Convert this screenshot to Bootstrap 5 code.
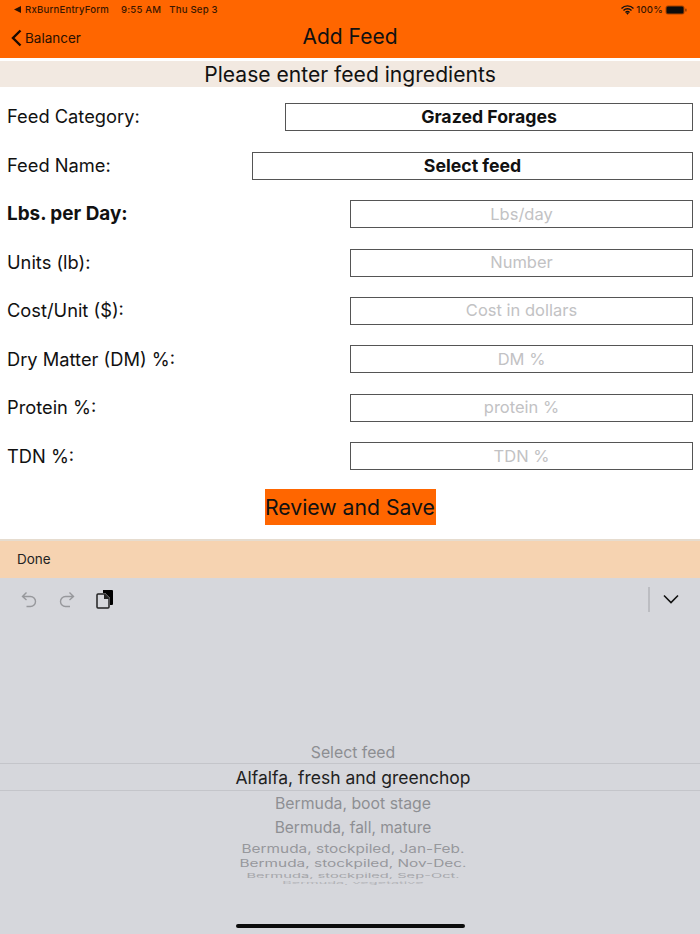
<!DOCTYPE html>
<html lang="en">
<head>
<meta charset="utf-8">
<title>Add Feed</title>
<link href="https://cdn.jsdelivr.net/npm/bootstrap@5.3.0/dist/css/bootstrap.min.css" rel="stylesheet">
<style>
html,body{height:934px;overflow:hidden;}
body{font-family:Inter,"Liberation Sans",sans-serif;color:#111;background:#fff;display:flex;flex-direction:column;}
.app-head{background:#f60;height:58px;flex:none;position:relative;}
.status-line{height:19px;padding:1px 13px 0 14px;font-size:9.6px;letter-spacing:.2px;color:#3a1600;font-weight:500;}
.status-line .right{color:#3a1600;gap:2px;}
.nav-line{height:39px;position:relative;}
.back-link{font-size:13.5px;color:#2a1000;gap:3px;padding-left:11px;height:39px;text-decoration:none;padding-bottom:1px;}
.title-text{position:absolute;left:0;right:0;top:0;line-height:35px;text-align:center;font-size:21px;color:#111;margin:0;font-weight:400;}
.banner{margin-top:3px;height:26px;line-height:28px;background:#f2e9e1;text-align:center;font-size:21.1px;flex:none;}
.form-area{padding:16.2px 7px 0;gap:20.45px;flex:none;height:452px;}
.form-line{height:28px;}
.form-line label{font-size:18.3px;margin:0;white-space:nowrap;}
.form-line label.fw-bold{font-size:18.9px;}
.field{height:28px;border:1px solid #555;border-radius:0;background:#fff;font-size:16.5px;text-align:center;padding:0 4px 1px;color:#111;box-shadow:none;}
.field::placeholder{color:#c2c2c4;opacity:1;}
.field.w-cat{width:408px;}
.field.w-name{width:441px;}
.field.w-num{width:343px;}
.pick{font-weight:700;font-size:17.7px;line-height:25px;padding:0 4px;}
.save-btn{align-self:center;height:36px;width:171px;margin-top:-1.8px;background:#f60;border:0;border-radius:0;color:#111;font-size:21.2px;line-height:36px;padding:0;white-space:nowrap;}
.done-bar{height:39px;flex:none;background:#f6d3b1;border-top:2px solid #e6dccf;padding-left:17px;padding-bottom:1px;font-size:13.5px;color:#222;}
.kbd{flex:1;background:#d6d7dc;position:relative;}
.tool-row{height:42px;padding:0 21px 0 20px;}
.tool-left{gap:20px;}
.tool-sep{width:2px;height:25px;background:#bcbdc2;margin-right:13px;}
.wheel{position:absolute;left:0;right:0;top:164px;text-align:center;}
.wh{display:block;white-space:nowrap;margin:0 auto;line-height:1;padding-left:6px;}
.wh0{font-size:15.8px;color:#8d8e92;height:21px;line-height:21px;}
.wh1{font-size:17.5px;color:#222;height:28px;line-height:28px;border-top:1px solid #c4c5ca;border-bottom:1px solid #c4c5ca;margin-bottom:1px;}
.wh2{font-size:15.8px;color:#8e8f93;height:24px;line-height:23px;}
.wh3{font-size:15.5px;color:#8e8f93;height:24px;line-height:23px;}
.wh4{font-size:15.4px;color:#97989c;height:17px;line-height:17px;transform:scaleY(.8);}
.wh5{font-size:15.4px;color:#97989c;height:14px;line-height:14px;transform:scaleY(.66);}
.wh6{font-size:14.7px;color:#a5a6aa;height:10px;line-height:10px;transform:scaleY(.46);}
.wh7{font-size:14.5px;color:#b2b3b7;height:3px;line-height:3px;transform:scaleY(.24);}
.home-bar{position:absolute;left:236px;bottom:6px;width:229px;height:4px;border-radius:2px;background:#0c0c0c;}
</style>
</head>
<body>
<header class="app-head">
  <div class="status-line d-flex align-items-center justify-content-between">
    <div class="d-flex align-items-center gap-1">
      <svg width="7" height="7" viewBox="0 0 7 7"><path d="M7 0v7L0 3.5z" fill="#2a1000"/></svg>
      <span>RxBurnEntryForm</span><span class="ms-2">9:55 AM</span><span class="ms-1">Thu Sep 3</span>
    </div>
    <div class="right d-flex align-items-center">
      <svg width="13" height="10" viewBox="0 0 13 10"><path d="M.5 3.4a8.5 8.5 0 0 1 12 0M2.5 5.5a5.6 5.6 0 0 1 8 0M4.5 7.4a2.8 2.8 0 0 1 4 0" fill="none" stroke="#111" stroke-width="1.4"/><path d="M5.2 8.3 6.5 9.8l1.3-1.5a1.8 1.8 0 0 0-2.6 0z" fill="#111"/></svg>
      <span>100%</span>
      <svg width="22" height="10" viewBox="0 0 22 10"><rect x=".5" y=".5" width="19" height="9" rx="2.5" fill="#3a1600" opacity=".45"/><rect x="1.5" y="1.5" width="17" height="7" rx="1.5" fill="#0c0c0c"/><rect x="20.3" y="3.4" width="1.2" height="3.2" rx=".6" fill="#7a3000"/></svg>
    </div>
  </div>
  <div class="nav-line">
    <h1 class="title-text">Add Feed</h1>
    <a class="back-link d-inline-flex align-items-center position-relative" href="#">
      <svg width="11" height="18" viewBox="0 0 11 18"><path d="M9.5 1.5 2 9l7.5 7.5" fill="none" stroke="#1a0a00" stroke-width="2.4"/></svg>
      <span>Balancer</span>
    </a>
  </div>
</header>
<div class="banner">Please enter feed ingredients</div>
<main class="form-area d-flex flex-column">
  <div class="form-line d-flex align-items-center justify-content-between"><label>Feed Category:</label><div class="field pick w-cat">Grazed Forages</div></div>
  <div class="form-line d-flex align-items-center justify-content-between"><label>Feed Name:</label><div class="field pick w-name">Select feed</div></div>
  <div class="form-line d-flex align-items-center justify-content-between"><label class="fw-bold">Lbs. per Day:</label><input class="field w-num" placeholder="Lbs/day"></div>
  <div class="form-line d-flex align-items-center justify-content-between"><label>Units (lb):</label><input class="field w-num" placeholder="Number"></div>
  <div class="form-line d-flex align-items-center justify-content-between"><label>Cost/Unit ($):</label><input class="field w-num" placeholder="Cost in dollars"></div>
  <div class="form-line d-flex align-items-center justify-content-between"><label>Dry Matter (DM) %:</label><input class="field w-num" placeholder="DM %"></div>
  <div class="form-line d-flex align-items-center justify-content-between"><label>Protein %:</label><input class="field w-num" placeholder="protein %"></div>
  <div class="form-line d-flex align-items-center justify-content-between"><label>TDN %:</label><input class="field w-num" placeholder="TDN %"></div>
  <button class="btn save-btn" type="button">Review and Save</button>
</main>
<div class="done-bar d-flex align-items-center">Done</div>
<section class="kbd">
  <div class="tool-row d-flex align-items-center justify-content-between">
    <div class="tool-left d-flex align-items-center">
      <svg width="18" height="18" viewBox="0 0 18 18"><path d="M6.5 2.5 2.5 6.5l4 3.6M2.5 6.5h8a5 5 0 0 1 0 10H6.5" fill="none" stroke="#97989c" stroke-width="1.4"/></svg>
      <svg width="18" height="18" viewBox="0 0 18 18"><path d="m11.5 2.5 4 4-4 3.6M15.5 6.5h-8a5 5 0 0 0 0 10H12" fill="none" stroke="#97989c" stroke-width="1.4"/></svg>
      <svg width="18" height="20" viewBox="0 0 18 20"><path d="M7 1h9a1 1 0 0 1 1 1v13a1 1 0 0 1-1 1h-2V9L9 4H7z" fill="#000"/><path d="M2 5h6.5l4.5 4.5V18a1 1 0 0 1-1 1H2a1 1 0 0 1-1-1V6a1 1 0 0 1 1-1z" fill="none" stroke="#222" stroke-width="1.5"/><path d="M8 5v5h5z" fill="#222"/></svg>
    </div>
    <div class="d-flex align-items-center">
      <span class="tool-sep"></span>
      <svg width="16" height="10" viewBox="0 0 16 10"><path d="m1 1.5 7 7 7-7" fill="none" stroke="#111" stroke-width="1.6"/></svg>
    </div>
  </div>
  <div class="wheel">
    <span class="wh wh0">Select feed</span>
    <span class="wh wh1">Alfalfa, fresh and greenchop</span>
    <span class="wh wh2">Bermuda, boot stage</span>
    <span class="wh wh3">Bermuda, fall, mature</span>
    <span class="wh wh4">Bermuda, stockpiled, Jan-Feb.</span>
    <span class="wh wh5">Bermuda, stockpiled, Nov-Dec.</span>
    <span class="wh wh6">Bermuda, stockpiled, Sep-Oct.</span>
    <span class="wh wh7">Bermuda, vegetative</span>
  </div>
  <div class="home-bar"></div>
</section>
<script src="https://cdn.jsdelivr.net/npm/bootstrap@5.3.0/dist/js/bootstrap.bundle.min.js"></script>
</body>
</html>
